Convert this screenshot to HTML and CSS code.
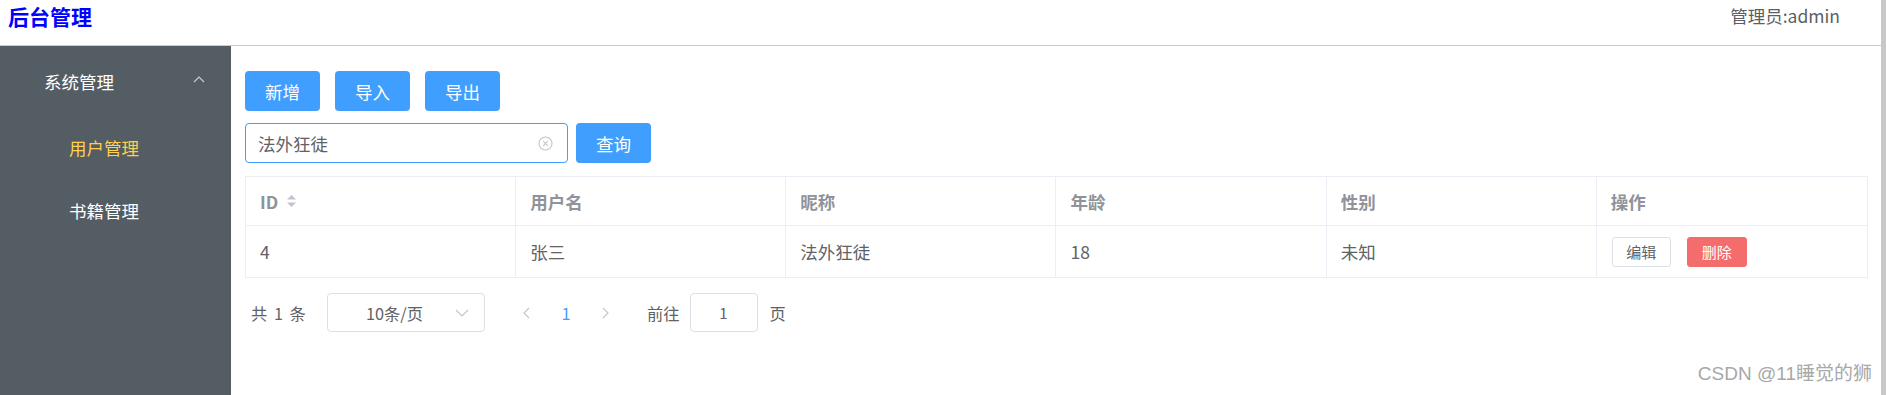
FILE: index.html
```html
<!DOCTYPE html>
<html lang="zh-CN">
<head>
<meta charset="utf-8">
<title>后台管理</title>
<link rel="stylesheet" href="styles.css">
</head>
<body>
<div class="app">
  <header class="header">
    <div class="brand">后台管理</div>
    <div class="user">管理员:admin</div>
  </header>
  <div class="body">
    <aside class="sidebar">
      <div class="submenu-title">
        <span>系统管理</span>
        <svg class="chev" width="12" height="7" viewBox="0 0 12 7"><polyline points="1,6 6,1 11,6" fill="none" stroke="#c9ccd1" stroke-width="1.2"/></svg>
      </div>
      <div class="menu-item active">用户管理</div>
      <div class="menu-item">书籍管理</div>
    </aside>
    <main class="main">
      <div class="toolbar">
        <button class="btn btn-primary">新增</button>
        <button class="btn btn-primary">导入</button>
        <button class="btn btn-primary">导出</button>
      </div>
      <div class="search">
        <div class="input-wrap">
          <input class="search-input" type="text" value="法外狂徒">
          <svg class="clear" width="15" height="15" viewBox="0 0 15 15"><circle cx="7.5" cy="7.5" r="6.5" fill="none" stroke="#c0c4cc" stroke-width="1.1"/><path d="M5.2 5.2 L9.8 9.8 M9.8 5.2 L5.2 9.8" stroke="#c0c4cc" stroke-width="1.1"/></svg>
        </div>
        <button class="btn btn-primary">查询</button>
      </div>
      <div class="table">
        <div class="th">ID
          <svg class="sort" width="11" height="14" viewBox="0 0 11 14"><polygon points="5.5,1 10,5.5 1,5.5" fill="#c0c4cc"/><polygon points="1,8.5 10,8.5 5.5,13" fill="#c0c4cc"/></svg>
        </div>
        <div class="th">用户名</div>
        <div class="th">昵称</div>
        <div class="th">年龄</div>
        <div class="th">性别</div>
        <div class="th last">操作</div>
        <div class="td">4</div>
        <div class="td">张三</div>
        <div class="td">法外狂徒</div>
        <div class="td">18</div>
        <div class="td">未知</div>
        <div class="td last">
          <button class="btn-mini">编辑</button>
          <button class="btn-mini btn-danger">删除</button>
        </div>
      </div>
      <div class="pagination">
        <span class="total">共 1 条</span>
        <div class="select">
          <span class="select-text">10条/页</span>
          <svg class="select-arrow" width="14" height="8" viewBox="0 0 14 8"><polyline points="1,1 7,7 13,1" fill="none" stroke="#c0c4cc" stroke-width="1.2"/></svg>
        </div>
        <span class="pager-btn"><svg width="8" height="12" viewBox="0 0 8 12"><polyline points="7,1 2,6 7,11" fill="none" stroke="#c0c4cc" stroke-width="1.1"/></svg></span>
        <span class="pager-num">1</span>
        <span class="pager-btn"><svg width="8" height="12" viewBox="0 0 8 12"><polyline points="1,1 6,6 1,11" fill="none" stroke="#c0c4cc" stroke-width="1.1"/></svg></span>
        <span class="jump-label">前往</span>
        <div class="jump-input">1</div>
        <span class="jump-suffix">页</span>
      </div>
    </main>
  </div>
  <div class="watermark">CSDN @11睡觉的狮</div>
</div>
</body>
</html>
```
FILE: styles.css
```css
* { box-sizing: border-box; }
html, body {
  margin: 0;
  padding: 0;
}
body {
  background: #c8c8c8;
  font-family: "Noto Sans CJK SC", "Open Sans", sans-serif;
  overflow: hidden;
}
.app {
  position: relative;
  width: 1881px;
  height: 395px;
  background: #fff;
  display: flex;
  flex-direction: column;
}
.header {
  height: 46px;
  border-bottom: 1px solid #cccccc;
  display: flex;
  justify-content: space-between;
  align-items: flex-start;
  flex-shrink: 0;
}
.brand {
  padding-left: 8px;
  font-size: 21px;
  font-weight: 700;
  color: #0000ff;
  line-height: 32px;
}
.user {
  padding-right: 41px;
  font-size: 17.5px;
  color: #5c5f66;
  line-height: 31px;
}
.body {
  flex: 1;
  display: flex;
  min-height: 0;
}
.sidebar {
  width: 231px;
  flex-shrink: 0;
  background: #545c64;
  color: #fff;
  font-size: 17.5px;
}
.submenu-title {
  height: 70px;
  padding: 0 26px 0 44px;
  display: flex;
  align-items: center;
  justify-content: space-between;
}
.chev { margin-top: -4px; }
.menu-item {
  height: 63px;
  padding-left: 69px;
  display: flex;
  align-items: center;
}
.menu-item.active { color: #ffd04b; }
.main {
  flex: 1;
  padding: 25px 13px 0 14px;
}
.toolbar {
  display: flex;
  gap: 15px;
}
.btn {
  font-family: inherit;
  border: none;
  border-radius: 4px;
  height: 40px;
  width: 75px;
  font-size: 17.5px;
  padding: 0;
  cursor: pointer;
}
.btn-primary {
  background: #409eff;
  color: #fff;
}
.search {
  margin-top: 12px;
  display: flex;
  gap: 8px;
}
.input-wrap {
  position: relative;
  width: 323px;
  height: 40px;
}
.search-input {
  width: 100%;
  height: 100%;
  border: 1px solid #409eff;
  border-radius: 4px;
  padding: 0 30px 0 12px;
  font-family: inherit;
  font-size: 17.5px;
  color: #606266;
  outline: none;
}
.clear {
  position: absolute;
  right: 15px;
  top: 13px;
}
.table {
  margin-top: 13px;
  border: 1px solid #ebeef5;
  display: grid;
  grid-template-columns: repeat(6, 1fr);
}
.th, .td {
  border-right: 1px solid #ebeef5;
  padding-left: 14px;
  display: flex;
  align-items: center;
  font-size: 17.5px;
}
.th.last, .td.last { border-right: none; }
.th {
  height: 49px;
  border-bottom: 1px solid #ebeef5;
  font-weight: 700;
  color: #909399;
}
.td {
  height: 51px;
  color: #606266;
}
.sort { margin-left: 8px; }
.btn-mini {
  font-family: inherit;
  height: 30px;
  width: 59px;
  padding: 0;
  border: 1px solid #dcdfe6;
  border-radius: 3px;
  background: #fff;
  color: #606266;
  font-size: 15px;
  margin-left: 1px;
}
.btn-danger {
  background: #f56c6c;
  border-color: #f56c6c;
  color: #fff;
  width: 60px;
  margin-left: 16px;
}
.pagination {
  margin-top: 15px;
  display: flex;
  align-items: center;
  font-size: 16.25px;
  color: #606266;
}
.total {
  width: 82px;
  padding-left: 6px;
  white-space: pre;
  word-spacing: 3px;
}
.select {
  width: 158px;
  height: 39px;
  border: 1px solid #dcdfe6;
  border-radius: 4px;
  display: flex;
  align-items: center;
  position: relative;
}
.select-text {
  width: 133px;
  text-align: center;
}
.select-arrow {
  position: absolute;
  right: 15px;
  top: 15px;
}
.pager-btn, .pager-num {
  width: 40px;
  display: flex;
  justify-content: center;
  align-items: center;
}
.select + .pager-btn { margin-left: 21px; }
.pager-num { color: #409eff; }
.jump-label { margin-left: 21px; }
.jump-input {
  margin-left: 10px;
  width: 68px;
  height: 39px;
  border: 1px solid #dcdfe6;
  border-radius: 4px;
  display: flex;
  align-items: center;
  justify-content: center;
  font-size: 15px;
}
.jump-suffix { margin-left: 12px; }
.watermark {
  position: absolute;
  right: 9px;
  bottom: 10px;
  font-family: "Liberation Sans", "Noto Sans CJK SC", sans-serif;
  font-size: 19px;
  line-height: 22px;
  color: #a8a8a8;
}
```
